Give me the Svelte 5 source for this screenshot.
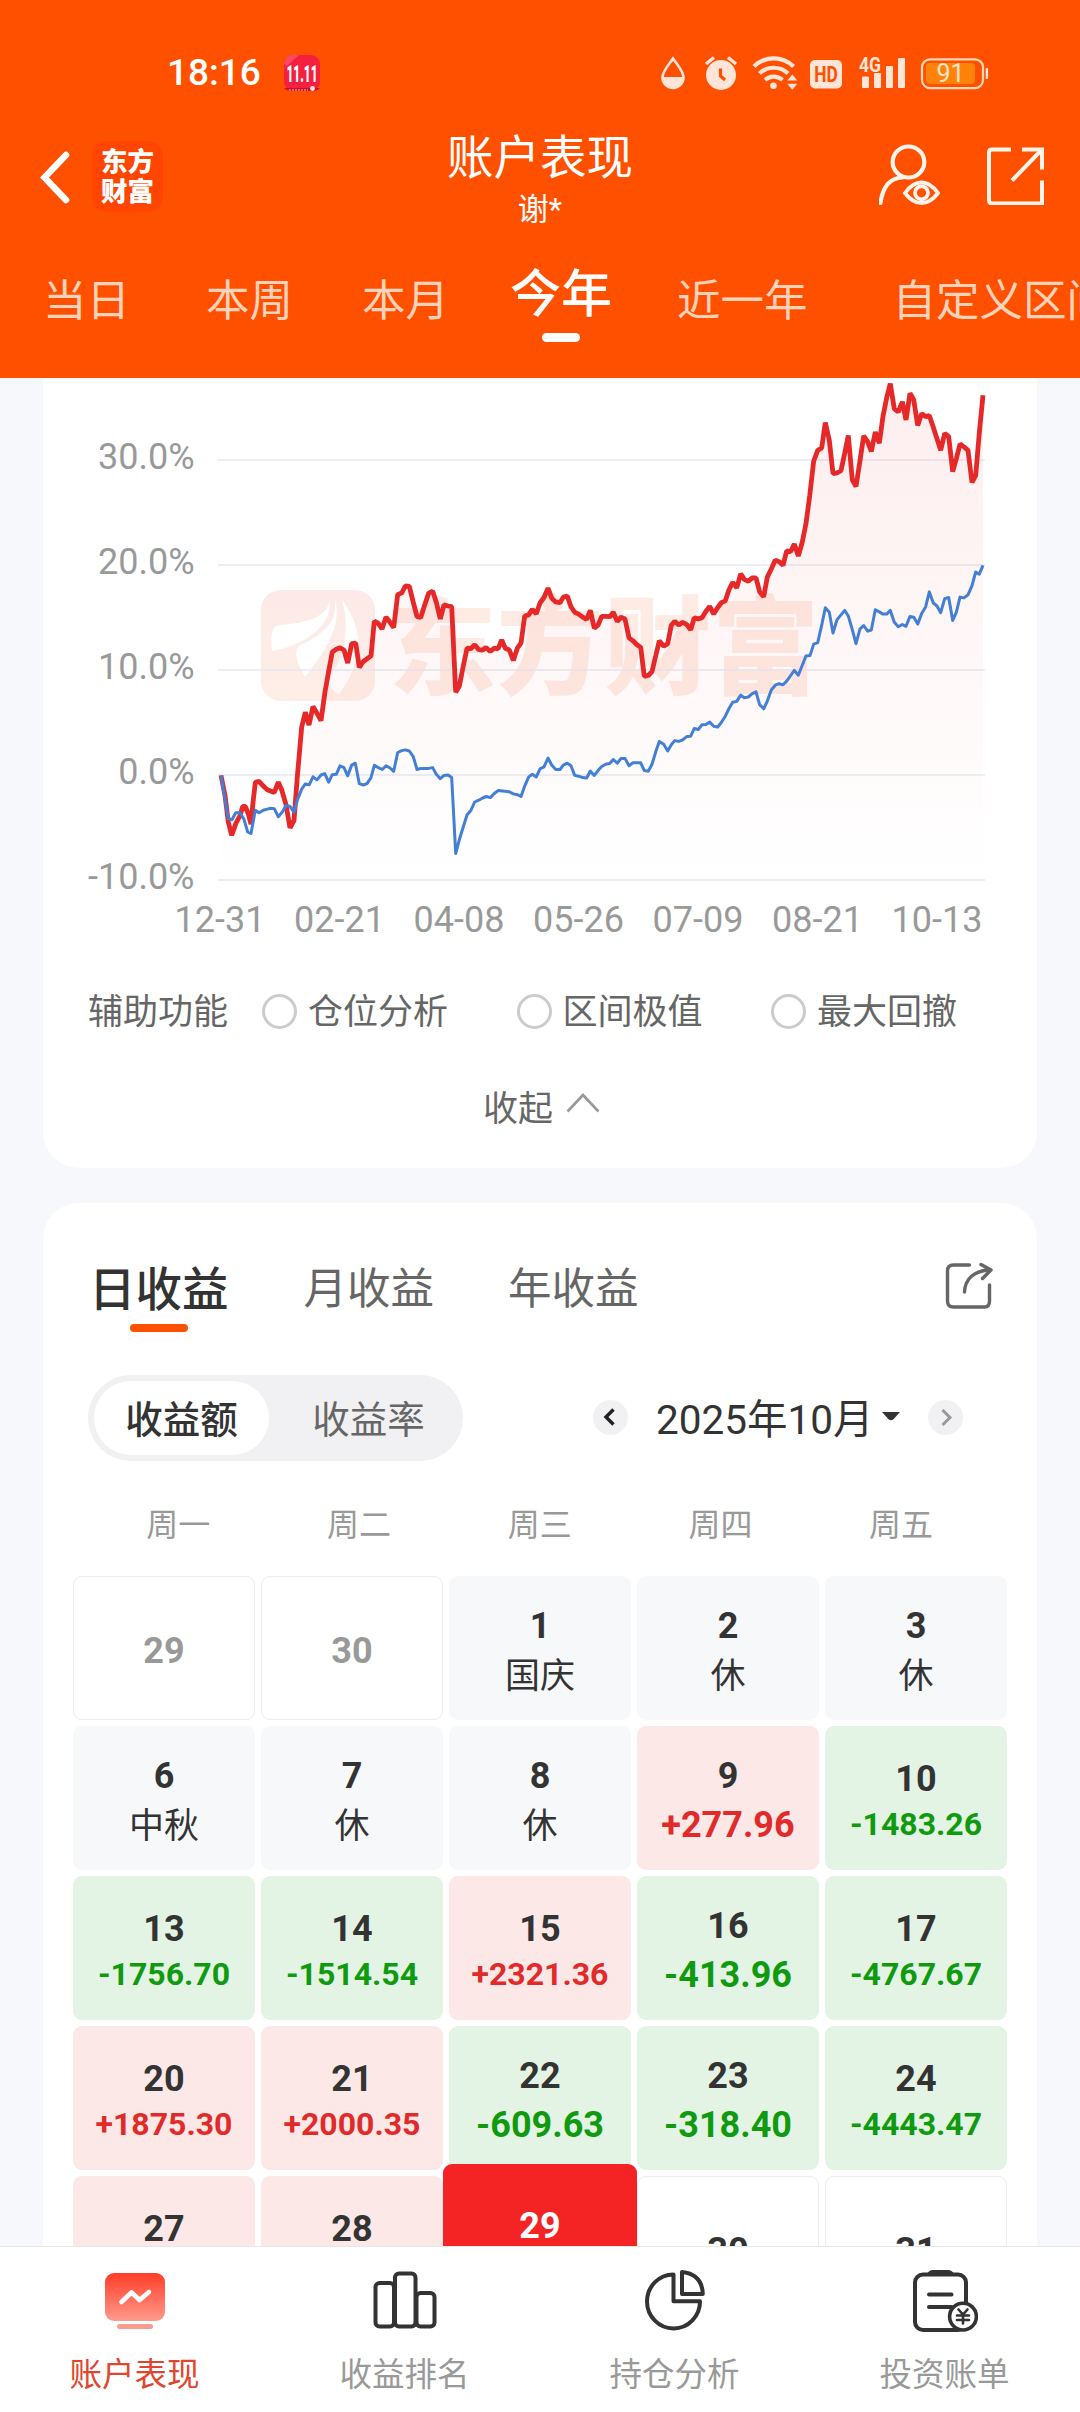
<script>
  const ranges = ['当日', '本周', '本月', '今年', '近一年', '自定义区间'];
  const helpers = ['仓位分析', '区间极值', '最大回撤'];
  const weekdays = ['周一', '周二', '周三', '周四', '周五'];

  // Plot space: 3 units per pixel across, 2.7034 units per pixel down.
  const toPoints = (flat) => {
    const out = [];
    for (let i = 0; i < flat.length; i += 2) {
      out.push((60 + flat[i] / 3 - 43).toFixed(1) + ',' + (flat[i + 1] / 2.7034 - 8).toFixed(1));
    }
    return out.join(' ');
  };
  const shifted = (flat) => flat.map((v, i) => (i % 2 ? v : v + 1440));

  const account = [
    483,1096,495,1150,505,1222,515,1258,528,1225,540,1205,548,1180,556,1180,565,1200,573,1228,579,1170,586,1115,597,1112,610,1125,622,1135,643,1142,655,1114,665,1135,678,1175,690,1238,702,1218,712,1100,725,965,736,925,747,960,759,910,771,928,783,948,795,870,805,820,817,762,829,755,840,751,852,757,863,792,875,740,887,738,898,804,910,788,933,773,943,679,955,685,966,700,978,668,990,682,1001,696,1013,607,1025,603,1036,584,1048,585,1060,628,1071,667,1082,669,1094,635,1106,603,1118,598,1129,628,1141,673,1152,635,1164,638,1175,640,1187,871,1198,855,1210,800,1221,752,1233,753,1244,743,1256,756,1268,757,1278,750,1291,761,1303,752,1314,754,1325,730,1336,752,1348,757,1360,785,1372,752,1383,738,1394,665,1406,662,1417,647,1429,659,1440,630,1452,615,
    ...shifted([24,590,35,617,47,627,60,629,70,614,82,611,93,640,104,655,116,660,128,668,140,674,151,650,163,698,174,690,185,666,197,666,210,667,220,655,232,680,243,668,255,673,267,724,279,732,290,742,302,750,313,828,325,826,336,815,348,770,358,732,371,747,383,740,394,690,404,679,416,689,428,682,440,688,452,702,463,670,475,673,486,670,498,652,509,639,521,660,533,642,544,629,556,624,567,594,578,574,590,589,602,551,613,566,625,571,637,562,648,562,659,600,671,613,682,560,694,538,706,514,717,518,729,528,740,489,752,491,763,470,775,503,787,465,798,415,809,340,821,246,833,217,845,211,856,142,868,190,879,280,891,278,903,272,914,225,925,177,937,297,948,315,960,245,971,178,983,194,994,220,1006,168,1018,198,1029,125,1040,75,1051,37,1063,105,1075,113,1087,86,1098,135,1110,63,1121,80,1133,150,1145,118,1157,126,1168,123,1180,155,1202,217,1214,171,1226,180,1238,275,1249,240,1260,200,1272,208,1284,217,1296,304,1307,285,1318,170,1329,68])
  ];
  const market = [
    483,1096,495,1160,505,1213,516,1216,527,1197,540,1197,552,1215,563,1249,573,1253,586,1190,597,1197,610,1190,622,1187,632,1185,643,1186,655,1208,667,1195,678,1177,690,1180,702,1195,713,1160,725,1133,736,1119,748,1121,759,1100,771,1108,783,1095,794,1091,806,1114,817,1094,829,1093,840,1070,852,1075,863,1097,875,1068,886,1063,898,1118,910,1122,921,1118,933,1102,943,1069,955,1075,967,1080,978,1070,990,1076,1001,1085,1013,1034,1025,1029,1036,1027,1048,1030,1060,1045,1071,1080,1083,1077,1106,1077,1118,1075,1129,1093,1141,1105,1152,1096,1164,1095,1175,1102,1187,1307,1198,1270,1210,1235,1221,1203,1233,1190,1244,1168,1256,1163,1268,1157,1279,1153,1291,1156,1303,1145,1314,1137,1348,1140,1360,1146,1372,1148,1383,1153,1394,1125,1406,1100,1417,1093,1429,1100,1440,1078,1452,1073,
    ...shifted([24,1049,35,1068,47,1080,60,1080,70,1068,82,1063,93,1070,104,1096,116,1098,128,1102,140,1103,151,1084,163,1096,174,1083,185,1072,197,1066,209,1064,220,1053,232,1063,243,1050,255,1050,267,1070,278,1062,302,1062,313,1083,325,1085,336,1066,348,1030,358,1004,371,1012,383,1030,394,1013,404,1002,416,1004,428,1000,440,991,452,990,463,969,475,972,486,959,498,958,509,952,521,963,533,965,544,953,556,936,567,915,578,898,590,896,602,879,613,886,625,884,637,875,648,870,659,905,671,916,682,895,694,865,706,852,717,848,729,851,740,841,752,826,763,812,775,825,787,798,798,773,810,772,821,741,833,737,845,690,856,643,868,655,879,711,891,675,903,662,914,650,925,665,937,702,948,740,960,700,971,691,983,706,994,703,1006,648,1018,654,1029,660,1040,660,1051,650,1063,682,1075,694,1087,688,1098,693,1110,666,1121,668,1133,687,1145,658,1157,640,1168,600,1180,630,1191,638,1202,656,1214,618,1226,615,1238,677,1249,655,1260,614,1272,616,1284,608,1296,583,1307,546,1318,552,1329,528])
  ];
  const accountLine = toPoints(account);
  const marketLine = toPoints(market);
  const area = `178,502.5 ${accountLine} 940,502.5`;

  const yTicks = [['30.0%', 82], ['20.0%', 187], ['10.0%', 292], ['0.0%', 397], ['-10.0%', 502]];
  const xTicks = ['12-31', '02-21', '04-08', '05-26', '07-09', '08-21', '10-13'];

  const day = (d, text = '', kind = 'plain') => ({ d, text, kind });
  const days = [
    day(29, '', 'other'), day(30, '', 'other'), day(1, '国庆', 'rest'), day(2, '休', 'rest'), day(3, '休', 'rest'),
    day(6, '中秋', 'rest'), day(7, '休', 'rest'), day(8, '休', 'rest'), day(9, '+277.96', 'up'), day(10, '-1483.26', 'down long'),
    day(13, '-1756.70', 'down long'), day(14, '-1514.54', 'down long'), day(15, '+2321.36', 'up long'), day(16, '-413.96', 'down'), day(17, '-4767.67', 'down long'),
    day(20, '+1875.30', 'up long'), day(21, '+2000.35', 'up long'), day(22, '-609.63', 'down'), day(23, '-318.40', 'down'), day(24, '-4443.47', 'down long'),
    day(27, '', 'up long'), day(28, '', 'up long'), day(29, '', 'today'), day(30), day(31)
  ];
</script>

<div class="screen">
  <header>
    <div class="status">
      <span class="time">18:16</span>
      <svg class="sale" width="36" height="36" viewBox="0 0 36 36">
        <rect width="36" height="36" rx="9" fill="#f5203f" />
        <path d="M0 9 Q1 0 9 0 L15 0 L3 11z" fill="#fb4a66" />
        <path d="M0 33h36q-2 3-9 3H9q-7 0-9-3z" fill="#c8102c" />
        <text x="18" y="26.500" text-anchor="middle" textLength="31" lengthAdjust="spacingAndGlyphs" class="sale-text">11.11</text>
        <circle cx="28.500" cy="33.500" r="2.400" fill="#ffe4e8" />
        <path d="M5 35h19" stroke="#ffb4bf" stroke-width="1" stroke-dasharray="2 1" />
      </svg>
      <svg class="indicators" width="330" height="38" viewBox="660 53 330 38">
        <g fill="#ffe4d8">
          <path d="M673 57.500C669 63.500 662.500 70 662.500 76.500a10.500 10.500 0 0 0 21 0C683.500 70 677 63.500 673 57.500z" fill="none" stroke="#ffe4d8" stroke-width="2.600" />
          <path d="M662.500 76h21a10.500 11 0 0 1-21 0z" />
          <circle cx="721" cy="74" r="15" />
          <path d="M706 63l8-6.500M736 63l-8-6.500" stroke="#ffe4d8" stroke-width="3.400" />
          <path d="M720.500 67.500v7.500l4.500 4" fill="none" stroke="#ff5000" stroke-width="3.200" />
          <g fill="none" stroke="#ffe4d8" stroke-width="4.200">
            <path d="M754 65.500a28 28 0 0 1 39.500 0" />
            <path d="M759.500 72.500a20.500 20.500 0 0 1 28.500 0" />
            <path d="M765 79a13 13 0 0 1 17.500 0" />
          </g>
          <circle cx="773.500" cy="84.800" r="3.300" />
          <path d="M787.300 79.500l5-6 5 6zM787.300 82.800l5 6 5-6z" />
          <rect x="810" y="59" width="32" height="28.500" rx="5" />
          <rect x="862" y="75.500" width="7" height="11.500" rx="1" />
          <rect x="874" y="72" width="7" height="15" rx="1" />
          <rect x="886" y="65" width="7" height="22" rx="1" />
          <rect x="898" y="57" width="7" height="30" rx="1" />
          <rect x="985.700" y="67" width="2.400" height="11" rx="1" />
        </g>
        <text x="826" y="81.300" text-anchor="middle" textLength="23.500" lengthAdjust="spacingAndGlyphs" class="hd">HD</text>
        <text x="859" y="70.500" textLength="22" lengthAdjust="spacingAndGlyphs" class="gen">4G</text>
        <rect x="922" y="58.300" width="61" height="28.800" rx="8" fill="none" stroke="#ffd9b8" stroke-width="2.200" />
        <rect x="926" y="62" width="49" height="21" rx="4" fill="#ff830a" />
        <text x="950.500" y="81.300" text-anchor="middle" class="pct">91</text>
      </svg>
    </div>

    <div class="titlebar">
      <div class="left">
        <svg width="32" height="54" viewBox="0 0 32 54"><path d="M26 5L4.500 27.500 26 50" fill="none" stroke="#fff" stroke-width="6.500" stroke-linecap="round" /></svg>
        <div class="brand"><span>东方</span><span>财富</span></div>
      </div>
      <div class="title">
        <h1>账户表现</h1>
        <p>谢*</p>
      </div>
      <div class="right">
        <svg width="62" height="64" viewBox="879.500 145 62 64" fill="none" stroke="#fff4ec" stroke-width="4.200" stroke-linecap="round">
          <ellipse cx="909" cy="163" rx="15.800" ry="15.500" />
          <path d="M881 204C883 189 889 179 903 178.500" />
          <path d="M905.500 194Q913 183.500 922 183.500T938.500 194Q931 204 922 204T905.500 194z" stroke-width="3.800" />
          <circle cx="922" cy="193.800" r="6.500" stroke-width="3.800" />
        </svg>
        <svg width="58" height="58" viewBox="987 146.500 58 58" fill="none" stroke="#fff4ec" stroke-width="4">
          <path d="M1011 149h-19q-3 0-3 3v48q0 3 3 3h52M1042 203V180M1022 149h20v20" />
          <path d="M1012 180l30-31" />
        </svg>
      </div>
    </div>

    <nav class="ranges">
      {#each ranges as r}
        <span class:active={r === '今年'}>{r}</span>
      {/each}
    </nav>
  </header>

  <main>
    <section class="card performance">
      <svg class="chart" width="994" height="562" viewBox="0 0 994 562">
        <defs>
          <linearGradient id="fade" x1="0" y1="0" x2="0" y2="1">
            <stop offset="0" stop-color="#f02828" stop-opacity=".08" />
            <stop offset="1" stop-color="#f02828" stop-opacity="0" />
          </linearGradient>
          <linearGradient id="badge" x1="0" y1="0" x2="0" y2="1">
            <stop offset="0" stop-color="#fdeae8" />
            <stop offset="1" stop-color="#fdeee6" />
          </linearGradient>
        </defs>
        <rect x="218" y="212" width="114" height="111" rx="20" fill="url(#badge)" />
        <g fill="#fff">
          <path d="M229 273C227 252 230 248 238 247C266 244 282 240 287 223C289 248 262 267 229 273z" />
          <path d="M292 222C300 248 280 276 262 299C254 285 250 274 256 268C280 256 294 246 292 222z" />
          <path d="M299 222C317 245 319 270 311 289C307 300 301 309 296 317C290 312 286 308 284 302C300 284 308 252 299 222z" />
        </g>
        <text x="346" y="308" class="watermark" textLength="430">东方财富</text>
        {#each yTicks as [label, y]}
          <line x1="175" x2="942" y1={y} y2={y} stroke="#e6e8f0" stroke-width="1.300" />
          <text x="151.500" y={y + 8.800} text-anchor="end" class="tick">{label}</text>
        {/each}
        {#each xTicks as label, i}
          <text x={177 + i * 119.5} y="553.500" text-anchor="middle" class="tick">{label}</text>
        {/each}
        <polygon points={area} fill="url(#fade)" />
        <polyline points={accountLine} fill="none" stroke="#e62828" stroke-width="4.800" stroke-linejoin="bevel" />
        <polyline points={marketLine} fill="none" stroke="#437fd6" stroke-width="3" stroke-linejoin="round" />
      </svg>
      <div class="helpers">
        <span class="caption">辅助功能</span>
        {#each helpers as h}
          <span class="option"><i></i>{h}</span>
        {/each}
      </div>
      <div class="collapse">
        收起
        <svg width="34" height="22" viewBox="0 0 34 22"><path d="M1.500 19.500L17 3l15.500 16.500" fill="none" stroke="#999" stroke-width="2.600" /></svg>
      </div>
    </section>

    <section class="card earnings">
      <div class="periods">
        <span class="active">日收益</span>
        <span>月收益</span>
        <span>年收益</span>
        <svg width="48" height="48" viewBox="945 1262 48 48" fill="none" stroke="#666" stroke-width="3.400" stroke-linecap="round" stroke-linejoin="round">
          <path d="M969.500 1265h-16q-6 0-6 6v30q0 6 6 6h31q5 0 5-6v-16" />
          <path d="M964.500 1292C965 1279 974 1270.500 990 1270M981 1264.500l10 5.500-8.500 8.500" />
        </svg>
      </div>
      <div class="controls">
        <div class="segmented"><span class="on">收益额</span><span>收益率</span></div>
        <div class="month">
          <svg width="35" height="35" viewBox="0 0 35 35"><circle cx="17.500" cy="17.500" r="17.500" fill="#f1f1f4" /><path d="M20.500 9.500l-7.500 7.500 7.500 7.500" fill="none" stroke="#222" stroke-width="3.400" /></svg>
          <span class="label">2025年10月<svg width="18" height="9" viewBox="0 0 18 9"><path d="M0 0h18L11.500 7.200q-2.500 2-5 0z" fill="#333" /></svg></span>
          <svg width="35" height="35" viewBox="0 0 35 35"><circle cx="17.500" cy="17.500" r="17.500" fill="#f1f1f4" /><path d="M14.500 10l7.500 7.500-7.500 7.500" fill="none" stroke="#999" stroke-width="3" /></svg>
        </div>
      </div>
      <div class="weekdays">
        {#each weekdays as w}<span>{w}</span>{/each}
      </div>
      <div class="calendar">
        {#each days as c}
          <div class="cell {c.kind}">
            <b>{c.d}</b>
            {#if c.text}<span>{c.text}</span>{/if}
          </div>
        {/each}
      </div>
    </section>
  </main>

  <nav class="tabbar">
    <div class="tab current">
      <svg width="66" height="66" viewBox="102 2268 66 66">
        <defs><linearGradient id="glow" x1="0" y1="0" x2="0" y2="1"><stop offset="0" stop-color="#ff3d28" /><stop offset="1" stop-color="#ff9a8c" /></linearGradient></defs>
        <rect x="105" y="2273" width="60" height="48" rx="9" fill="url(#glow)" />
        <path d="M121.500 2302l10-9.500 8 7.500 9.500-8" fill="none" stroke="#fff" stroke-width="4.600" stroke-linecap="round" stroke-linejoin="round" />
        <rect x="117" y="2324" width="36" height="5" rx="2.500" fill="#f99c90" />
      </svg>
      <span>账户表现</span>
    </div>
    <div class="tab">
      <svg width="66" height="66" viewBox="372 2268 66 66" fill="none" stroke="#333" stroke-width="4">
        <rect x="375.500" y="2283" width="18.500" height="43.500" rx="4" />
        <rect x="395" y="2273.500" width="20.500" height="53" rx="4" />
        <rect x="416.500" y="2293" width="18" height="33.500" rx="4" />
      </svg>
      <span>收益排名</span>
    </div>
    <div class="tab">
      <svg width="66" height="66" viewBox="642 2268 66 66" fill="none" stroke="#333" stroke-width="4" stroke-linejoin="round">
        <path d="M673.500 2274.500V2301.200H700A26.500 27 0 1 1 673.500 2274.500z" />
        <path d="M682 2272V2294H702.800Q702 2274 682 2272z" />
      </svg>
      <span>持仓分析</span>
    </div>
    <div class="tab">
      <svg width="66" height="66" viewBox="912 2268 66 66" fill="none" stroke="#333" stroke-width="4" stroke-linecap="round">
        <rect x="915" y="2274.500" width="51" height="55.500" rx="8" />
        <path d="M927 2274q2-4 6-4h15q4 0 6 4z" fill="#333" stroke="none" />
        <path d="M929 2294.500h22.500M929 2307h22.500" />
        <circle cx="963" cy="2316.600" r="13.400" fill="#fff" stroke-width="3.600" />
        <path d="M958.500 2309.500l4.500 5 4.500-5M963 2314.500v9M957 2315.500h12M957 2320h12" stroke-width="2.600" />
      </svg>
      <span>投资账单</span>
    </div>
  </nav>
</div>

<style>
  :global(body) { background: #f7f8fb; }
  .screen {
    width: 1080px; height: 2412px; overflow: hidden;
    display: flex; flex-direction: column;
    background: #f7f8fb; color: #333;
    font-family: Roboto, "Noto Sans CJK SC", sans-serif;
  }
  svg { display: block; flex: none; }
  h1, p { margin: 0; font-weight: 400; }

  header { flex: none; height: 378px; background: #ff5000; color: #fff; overflow: hidden; }
  .status { display: flex; align-items: center; height: 94px; padding: 52px 90px 0 167px; box-sizing: border-box; }
  .time { font-size: 37px; line-height: 42px; width: 117px; font-weight: 500; }
  .indicators { margin-left: auto; margin-top: -1px; }
  .sale-text { font: 900 23px Roboto, sans-serif; fill: #fff; }
  .hd { font: 700 22px Roboto, sans-serif; fill: #ff5000; }
  .gen { font: 700 20px Roboto, sans-serif; fill: #ffe4d8; }
  .pct { font: 400 25px Roboto, sans-serif; fill: #ffe4c8; }

  .titlebar { display: grid; grid-template-columns: 1fr auto 1fr; margin-top: 22px; height: 120px; }
  .left { display: flex; align-items: center; gap: 20px; padding-left: 40px; }
  .left svg { margin-top: 1px; }
  .brand {
    width: 71px; height: 71px; border-radius: 15px; background: #ff4500;
    display: flex; flex-direction: column; align-items: center; justify-content: center;
    font-size: 26.500px; line-height: 30px; font-weight: 900;
  }
  .brand span { padding-top: 1px; margin-bottom: -1px; }
  .title { text-align: center; padding-top: 16px; }
  h1 { font-size: 46.500px; line-height: 52px; }
  .title p { font-size: 31px; line-height: 40px; margin-top: 6px; }
  .right { display: flex; align-items: center; justify-content: flex-end; gap: 46px; padding-right: 35px; }

  .ranges { display: flex; align-items: flex-start; height: 142px; padding-left: 43px; color: #ffd2b9; white-space: nowrap; }
  .ranges span { font-size: 43.500px; line-height: 60px; margin-top: 36px; flex: none; }
  .ranges span:nth-child(2) { margin-left: 76px; }
  .ranges span:nth-child(3) { margin-left: 69px; }
  .ranges span:nth-child(4) { margin-left: 61px; }
  .ranges span:nth-child(5) { margin-left: 65px; }
  .ranges span:nth-child(6) { margin-left: 85px; }
  .ranges .active {
    font-size: 51px; margin-top: 29px; color: #fff; font-weight: 500;
    display: flex; flex-direction: column; align-items: center;
  }
  .ranges .active::after { content: ""; width: 38px; height: 9px; border-radius: 5px; background: #fff; margin-top: 8px; }

  main { flex: 1; min-height: 0; overflow: hidden; padding: 0 43px; }
  .card { background: #fff; border-radius: 36px; }
  .performance { height: 790px; border-top-left-radius: 0; border-top-right-radius: 0; }
  .watermark { font: 900 107px "Noto Sans CJK SC", sans-serif; fill: #fdebe4; }
  .tick { font: 400 36px Roboto, sans-serif; fill: #999; }
  .helpers { display: flex; align-items: center; height: 50px; margin-top: 47px; padding-left: 45px; font-size: 35px; line-height: 50px; color: #666; padding-top: 2px; box-sizing: border-box; }
  .caption { width: 174px; }
  .option { display: flex; align-items: center; width: 254.500px; }
  .option i { width: 35px; height: 35px; box-sizing: border-box; border: 3px solid #ccc; border-radius: 50%; margin: -3px 11px 0 0; }
  .collapse { display: flex; align-items: center; gap: 13px; height: 50px; margin-top: 43px; padding-left: 440px; font-size: 35px; color: #666; }
  .collapse svg { margin-top: -5px; }

  .earnings { margin-top: 38px; height: 1200px; padding: 0 30px; margin-top: 35px; }
  .periods { display: flex; align-items: flex-start; padding: 57px 14px 0 16px; color: #666; height: 115px; }
  .periods span { font-size: 43.500px; line-height: 60px; margin-right: 74px; }
  .periods .active {
    font-size: 46.500px; font-weight: 500; color: #333; margin-right: 75px;
    display: flex; flex-direction: column; align-items: center;
  }
  .periods .active::after { content: ""; width: 58px; height: 8px; border-radius: 4px; background: #ff5000; margin-top: 4px; }
  .periods svg { margin: 2px 0 0 auto; }
  .controls { display: flex; justify-content: space-between; align-items: center; height: 86px; padding: 0 44px 0 15px; }
  .segmented { display: flex; width: 375px; height: 86px; border-radius: 43px; background: #f1f1f4; padding: 6px; box-sizing: border-box; }
  .segmented span { width: 175px; line-height: 79px; height: 74px; text-align: center; font-size: 37.500px; color: #666; padding-left: 12px; }
  .segmented .on { background: #fff; border-radius: 37px; color: #333; font-weight: 500; padding: 0; }
  .month { display: flex; align-items: center; }
  .label { display: flex; align-items: center; font-size: 40.500px; line-height: 50px; width: 271px; margin-left: 28px; padding-top: 4px; margin-right: 1px; }
  .label svg { margin-left: 8px; }
  .month > svg { margin-top: -1px; }
  .label svg { margin-top: -7px; }
  .weekdays { display: grid; grid-template-columns: repeat(5, 180.700px); padding-left: 15px; margin-top: 43px; height: 72px; }
  .weekdays span { text-align: center; font-size: 32px; line-height: 42px; color: #999; }
  .calendar { display: grid; grid-template-columns: repeat(5, 182px); grid-auto-rows: 144px; gap: 6px; }
  .cell { box-sizing: border-box; border-radius: 9px; display: flex; flex-direction: column; align-items: center; padding-top: 29px; }
  .cell b { font-size: 36px; line-height: 42px; font-weight: 700; }
  .cell span { font-size: 35px; line-height: 56px; }
  .other, .plain { border: 1px solid #ededf0; padding-top: 53px; }
  .other { color: #999; }
  .rest { background: #f7f8fa; }
  .rest span { padding-top: 2px; }
  .up { background: #fce8e7; }
  .down { background: #e4f4e4; }
  .up span, .down span { font-size: 36px; font-weight: 700; }
  .up span { color: #e12b2b; }
  .down span { color: #0f9a0f; }
  .cell.long { padding-top: 32px; }
  .long span { font-size: 32px; line-height: 49px; }
  .today { background: #f42424; color: #fff; margin: -12px -6px 0; padding-top: 41px; position: relative; }

  .tabbar { flex: none; display: flex; height: 166px; box-sizing: border-box; border-top: 1px solid #e6e7ea; background: #fff; }
  .tab { flex: 1; display: flex; flex-direction: column; align-items: center; padding-top: 21px; font-size: 32.500px; line-height: 42px; color: #999; }
  .tab span { margin: 20px 1px 0 0; }
  .current { color: #e2452e; }
</style>
